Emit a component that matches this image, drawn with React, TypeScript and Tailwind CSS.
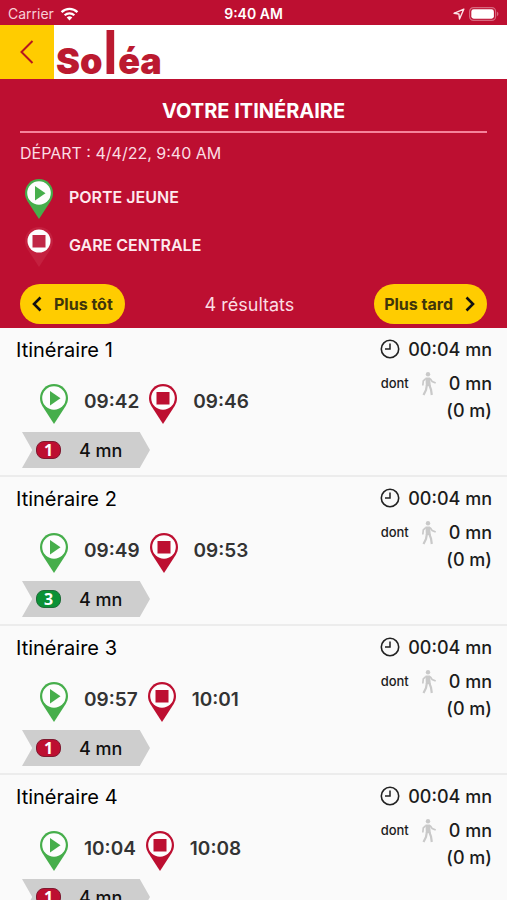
import clsx from "clsx"

const itineraries = [
  { id: 1, from: "09:42", to: "09:46", line: "1" },
  { id: 2, from: "09:49", to: "09:53", line: "3" },
  { id: 3, from: "09:57", to: "10:01", line: "1" },
  { id: 4, from: "10:04", to: "10:08", line: "1" },
]

const lineColors: Record<string, string> = {
  "1": "bg-[#bd0f31] border-[#7d1a30]",
  "3": "bg-[#0b9136] border-[#1f6b38]",
}

const PIN = "M14 0C6.3 0 0 6.2 0 14c0 3 .9 5.6 2.3 7.9L14 40l11.7-18.1C27.1 19.600 28 17 28 14 28 6.2 21.7 0 14 0z"

function StartPin() {
  return (
    <svg viewBox="0 0 28 40" className="w-7 h-10 shrink-0" aria-hidden="true">
      <path d={PIN} fill="#46ae4b" />
      <circle cx="14" cy="14" r="11.8" fill="#fdfdfd" />
      <path d="M10 7v14.5l10.500-7.200z" fill="#46ae4b" />
    </svg>
  )
}

function EndPin({ faded = false }: { faded?: boolean }) {
  return (
    <svg viewBox="0 0 28 40" className="w-7 h-10 shrink-0" aria-hidden="true">
      <path d={PIN} fill={faded ? "#c4203f" : "#bd0f31"} />
      <circle cx="14" cy="14" r={faded ? 11.5 : 11.8} fill="#fdfdfd" />
      <rect x="7.5" y="8" width="13" height="12.5" fill={faded ? "#c02645" : "#bd0f31"} />
    </svg>
  )
}

function StatusBar() {
  return (
    <div className="grid grid-cols-3 items-center h-[25px] pt-0.5 px-2 text-white">
      <div className="flex items-center gap-1.5 text-[14px] text-[#f7cfd6]">
        Carrier
        <svg viewBox="0 0 20 15" className="w-[19px] h-[14px]" aria-label="Wi-Fi">
          <path d="M1.5 5.5a12.300 12.300 0 0 1 17 0" fill="none" stroke="#fff" strokeWidth="2.5" />
          <path d="M4.8 8.9a7.600 7.600 0 0 1 10.4 0" fill="none" stroke="#fff" strokeWidth="2.4" />
          <path d="M10 14.5l-3-3.200a4.300 4.300 0 0 1 6 0z" fill="#fff" />
        </svg>
      </div>
      <div className="text-center text-[14px] font-semibold">9:40 AM</div>
      <div className="flex items-center justify-end gap-1">
        <svg viewBox="0 0 12 12" className="w-3 h-3" aria-hidden="true">
          <path d="M10.8 1.2L1 5.3l4.9.7.6 5z" fill="none" stroke="#fbe3e7" strokeWidth="1.4" strokeLinejoin="round" />
        </svg>
        <svg viewBox="0 0 30 14" className="w-[30px] h-[14px]" aria-label="Battery">
          <rect x=".6" y=".6" width="26" height="12.8" rx="3.8" fill="none" stroke="#d7697f" strokeWidth="1.2" />
          <rect x="2.3" y="2.3" width="22.6" height="9.4" rx="2.4" fill="#fff" />
          <path d="M28 4.8a2.400 2.400 0 0 1 0 4.400z" fill="#d7697f" />
        </svg>
      </div>
    </div>
  )
}

function Duration() {
  return (
    <div className="flex flex-col items-end text-[18px] font-medium text-[#1c1c1c]">
      <div className="flex items-center gap-2 h-[26px]">
        <svg viewBox="0 0 20 20" className="w-5 h-5" fill="none" stroke="#222" aria-hidden="true">
          <circle cx="10" cy="10" r="8.7" strokeWidth="1.6" />
          <path d="M10 4.5V10H5" strokeWidth="1.5" />
        </svg>
        00:04 mn
      </div>
      <div className="flex items-center h-[27px] mt-2">
        <span className="text-[13px]">dont</span>
        <svg viewBox="0 0 16 24" className="w-4 h-6 mx-3" fill="none" stroke="#c9c9c9" aria-hidden="true">
          <circle cx="7" cy="2.3" r="2.2" fill="#c9c9c9" stroke="none" />
          <path d="M4.500 5.500h4.500l.8 8.500H4.800z" fill="#c9c9c9" stroke="none" />
          <path d="M9 6.500l2.200 3 3.500 1.600M4.800 6.500L2.300 9l-.5 4.500" strokeWidth="1.700" />
          <path d="M5.800 13.500L5 18l-2.500 5M8.500 13.500l1.500 4 .8 5.500" strokeWidth="2.200" />
        </svg>
        0 mn
      </div>
      <div className="h-[27px] leading-[27px]">(0 m)</div>
    </div>
  )
}

export default function App() {
  return (
    <div className="min-h-screen bg-[#fafafa] font-['Inter','Liberation_Sans',sans-serif]">
      <header className="bg-[#bd0f31]">
        <StatusBar />

        <div className="flex h-[54px] bg-white">
          <button aria-label="Retour" className="flex items-center justify-center w-[54px] bg-[#fc0]">
            <svg viewBox="0 0 14 24" className="w-3.5 h-6" fill="none" stroke="#b5171f" strokeWidth="2">
              <path d="M12.5 1L1.5 12l11 11" />
            </svg>
          </button>
          <div className="flex items-baseline ml-0.5 leading-[54px] text-[36px] font-black text-[#bb1a30]">
            <span>So</span>
            <span className="text-[60px] font-semibold">l</span>
            <span>éa</span>
          </div>
        </div>

        <div className="px-5 pt-[18px] pb-1 text-white">
          <h1 className="pb-1.5 text-center text-[20px] leading-7 font-bold border-b-2 border-[#f5839b]">
            VOTRE ITINÉRAIRE
          </h1>
          <p className="mt-2 text-[16px] leading-6 text-[#fbdde3]">DÉPART : 4/4/22, 9:40 AM</p>

          <div className="flex flex-col gap-2 mt-3.5 pl-[5px] text-[16px] font-semibold text-[#fdeaee]">
            <div className="flex items-center gap-4">
              <StartPin />
              <span className="pb-1">PORTE JEUNE</span>
            </div>
            <div className="flex items-center gap-4">
              <EndPin faded />
              <span className="pb-1">GARE CENTRALE</span>
            </div>
          </div>

          <div className="flex items-center justify-between mt-[17px]">
            <button className="flex items-center gap-3 h-10 px-3 rounded-full bg-[#fc0] text-[16px] font-bold text-[#40350a]">
              <svg viewBox="0 0 10 16" className="w-2.5 h-4" fill="none" stroke="#111" strokeWidth="2.6">
                <path d="M8.5 1.5L2 8l6.5 6.5" />
              </svg>
              Plus tôt
            </button>
            <span className="text-[18px] text-[#fbdde3]">4 résultats</span>
            <button className="flex items-center gap-3 h-10 pl-2.5 pr-3 rounded-full bg-[#fc0] text-[16px] font-bold text-[#40350a]">
              Plus tard
              <svg viewBox="0 0 10 16" className="w-2.5 h-4" fill="none" stroke="#111" strokeWidth="2.6">
                <path d="M1.5 1.5L8 8l-6.500 6.500" />
              </svg>
            </button>
          </div>
        </div>
      </header>

      <main>
        {itineraries.map((item) => (
          <section key={item.id} className="flex justify-between pl-4 pr-[15px] pt-2 pb-[7px] border-b-2 border-[#ececec]">
            <div>
              <h2 className="text-[20px] leading-7 text-black">Itinéraire {item.id}</h2>
              <div className="flex items-center mt-5 pl-6 text-[19px] font-semibold text-[#333]">
                <StartPin />
                <span className="ml-4 mr-2.5 pb-1">{item.from}</span>
                <EndPin />
                <span className="ml-4 pb-1">{item.to}</span>
              </div>
              <div className="flex items-center gap-[18px] w-32 h-9 mt-2 ml-1.5 pl-3.5 bg-[#cecece] text-[18px] font-medium text-[#111] [clip-path:polygon(0_0,92%_0,100%_50%,92%_100%,0_100%,8%_50%)]">
                <span
                  className={clsx(
                    "flex items-center justify-center w-[25px] h-[18px] rounded-lg border text-[16px] font-bold text-white font-['Open_Sans',sans-serif]",
                    lineColors[item.line]
                  )}
                >
                  {item.line}
                </span>
                4 mn
              </div>
            </div>
            <Duration />
          </section>
        ))}
      </main>
    </div>
  )
}
